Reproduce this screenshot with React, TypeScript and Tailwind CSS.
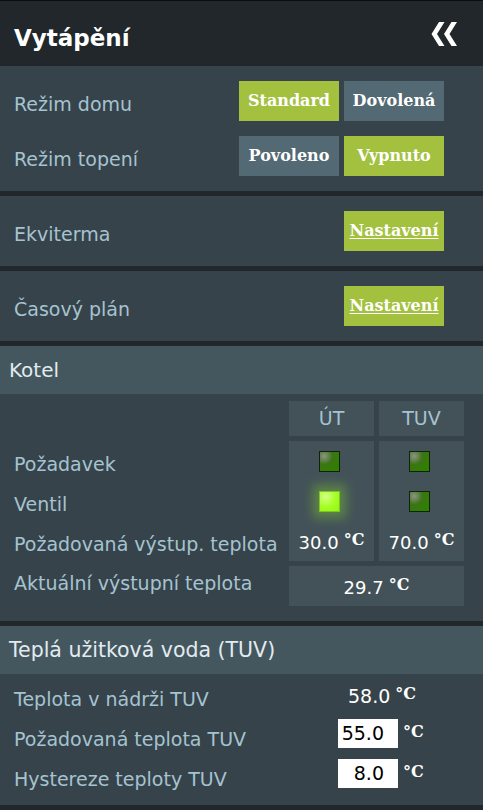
import React from 'react';

const label = "text-[19px] text-[#a5c3d1] leading-none pt-[6px]";
const serifBold = "font-['DejaVu_Serif',serif] font-bold";

function Chevrons() {
  return (
    <svg width="26" height="24" viewBox="0 0 26 24" className="fill-white">
      <path d="M8 0 H13.5 L6 12 L13.5 24 H8 L0.5 12 Z" />
      <path d="M20.5 0 H26 L18.5 12 L26 24 H20.5 L13 12 Z" />
    </svg>
  );
}

function Btn({ text, active, link }: { text: string; active?: boolean; link?: boolean }) {
  return (
    <div
      className={`w-[100px] h-[40px] flex items-center justify-center text-white text-[16px] ${serifBold} ${
        active ? 'bg-[#a3c13f]' : 'bg-[#536973]'
      } ${link ? 'underline underline-offset-2' : ''}`}
    >
      {text}
    </div>
  );
}

function Led({ on }: { on?: boolean }) {
  if (on) {
    return (
      <div className="w-[21px] h-[21px] border border-[#7cc22a] bg-[radial-gradient(circle_at_30%_25%,#d4ff88_0%,#a2ff1e_55%,#96f514_100%)] shadow-[0_0_11px_6px_rgba(150,240,30,0.33)]" />
    );
  }
  return (
    <div className="w-[21px] h-[21px] border border-[#13200c] bg-[radial-gradient(circle_at_22%_22%,#8c9488_0%,#3d7416_40%,#2f8000_75%)]" />
  );
}

function Deg() {
  return <span className={`text-[16px] ${serifBold} relative -top-[2px] ml-[5px]`}>°C</span>;
}

function Row({ title, children }: { title: string; children: React.ReactNode }) {
  return (
    <div className="h-[40px] flex items-center">
      <span className={`${label} flex-1 pl-[14px]`}>{title}</span>
      <div className="flex gap-[5px] mr-[39px]">{children}</div>
    </div>
  );
}

export default function App() {
  return (
    <div className="w-[483px] h-[810px] bg-[#21272b] font-['DejaVu_Sans',sans-serif] flex flex-col overflow-hidden">
      {/* header */}
      <div className="h-[66px] border-t border-[#0b0e10] flex items-center justify-between pl-[14px] pr-[26px]">
        <h1 className="text-white text-[23px] font-bold leading-none mt-[9px]">Vytápění</h1>
        <Chevrons />
      </div>

      <div className="bg-[#37434a] py-[15px] flex flex-col gap-[15px]">
        <Row title="Režim domu">
          <Btn text="Standard" active />
          <Btn text="Dovolená" />
        </Row>
        <Row title="Režim topení">
          <Btn text="Povoleno" />
          <Btn text="Vypnuto" active />
        </Row>
      </div>

      <div className="bg-[#37434a] mt-[5px] h-[70px] flex flex-col justify-center">
        <Row title="Ekviterma">
          <Btn text="Nastavení" active link />
        </Row>
      </div>

      <div className="bg-[#37434a] mt-[5px] h-[70px] flex flex-col justify-center">
        <Row title="Časový plán">
          <Btn text="Nastavení" active link />
        </Row>
      </div>

      {/* Kotel */}
      <div className="mt-[5px] h-[48px] bg-[#44575f] flex items-center pl-[9px] text-[20px] text-[#e2ebef]">Kotel</div>
      <div className="bg-[#37434a] pt-[7px] pb-[15px] pr-[19px] flex flex-col gap-[5px]">
        <div className="flex justify-end gap-[5px]">
          <div className="w-[85px] h-[35px] bg-[#435259] flex items-center justify-center text-[19px] text-[#a5c3d1]">ÚT</div>
          <div className="w-[85px] h-[35px] bg-[#435259] flex items-center justify-center text-[19px] text-[#a5c3d1]">TUV</div>
        </div>
        <div className="flex gap-[5px]">
          <div className="flex-1 flex flex-col">
            <div className={`h-[40px] flex items-center pl-[14px] ${label}`}>Požadavek</div>
            <div className={`h-[40px] flex items-center pl-[14px] ${label}`}>Ventil</div>
            <div className={`h-[40px] flex items-center pl-[14px] ${label}`}>Požadovaná výstup. teplota</div>
          </div>
          {[
            { a: false, b: true, t: '30.0' },
            { a: false, b: false, t: '70.0' },
          ].map((c, i) => (
            <div key={i} className="w-[85px] bg-[#435259] flex flex-col">
              <div className="h-[40px] flex items-center justify-center pr-[4px]">
                <Led on={c.a} />
              </div>
              <div className="h-[40px] flex items-center justify-center pr-[4px]">
                <Led on={c.b} />
              </div>
              <div className="h-[40px] flex items-center justify-center text-white text-[18px] pt-[2px]">
                {c.t}
                <Deg />
              </div>
            </div>
          ))}
        </div>
        <div className="flex items-center">
          <div className="flex-1 pl-[14px] text-[19px] text-[#a5c3d1] leading-none pb-[6px]">Aktuální výstupní teplota</div>
          <div className="w-[175px] h-[40px] bg-[#435259] flex items-center justify-center text-white text-[18px] pt-[2px]">
            29.7
            <Deg />
          </div>
        </div>
      </div>

      {/* TUV */}
      <div className="mt-[5px] h-[48px] bg-[#44575f] flex items-center pl-[9px] text-[20.5px] text-[#e2ebef]">
        Teplá užitková voda (TUV)
      </div>
      <div className="bg-[#37434a] pt-[2px] h-[131px] flex flex-col">
        <div className="h-[40px] flex items-center">
          <div className={`w-[338px] pl-[14px] ${label}`}>Teplota v nádrži TUV</div>
          <div className="pl-[10px] text-white text-[19px] flex items-center">
            58.0
            <Deg />
          </div>
        </div>
        {[
          { l: 'Požadovaná teplota TUV', v: '55.0' },
          { l: 'Hystereze teploty TUV', v: '8.0' },
        ].map((r) => (
          <div key={r.l} className="h-[40px] flex items-center">
            <div className={`w-[338px] pl-[14px] ${label}`}>{r.l}</div>
            <div className="flex items-center mb-[5px] text-white">
              <div className="w-[60px] h-[29px] bg-white text-black text-[19px] flex items-center justify-end pr-[14px]">
                {r.v}
              </div>
              <span className={`text-[16px] ${serifBold} ml-[5px] -mt-[3px]`}>°C</span>
            </div>
          </div>
        ))}
      </div>
    </div>
  );
}
